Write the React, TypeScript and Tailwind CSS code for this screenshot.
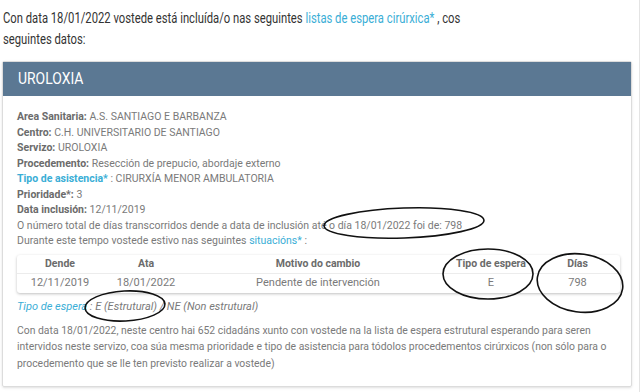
const LINK = 'text-[#3aaed6]';

function Info({ label, children }: { label: string; children: React.ReactNode }) {
  return (
    <div>
      <span className="font-bold text-[#6b6b6b]">{label}</span> {children}
    </div>
  );
}

export default function App() {
  return (
    <div className="relative w-[640px] h-[392px] overflow-hidden bg-white border-r border-[#e4e4e4] font-['Roboto',sans-serif]">
      <p className="w-[660px] origin-left scale-x-[0.75] px-[4px] pt-[8px] text-[15px] leading-[21px] text-[#333]">
        Con data 18/01/2022 vostede está incluída/o nas seguintes{' '}
        <span className={LINK}>listas de espera cirúrxica*</span> , cos seguintes datos:
      </p>

      <div className="mt-[11px] ml-[2px] w-[630px] border border-[#dcdcdc] rounded-[2px] shadow-sm">
        <div className="h-[34px] bg-[#5b7893] px-[15px] flex items-center">
          <h2 className="origin-left scale-x-[0.87] text-white text-[16px]">UROLOXIA</h2>
        </div>

        <div className="px-[14px] pt-[13px] pb-[14px] text-[10.5px] text-[#7a7a7a]">
          <div className="leading-[15.5px]">
            <Info label="Area Sanitaria:">A.S. SANTIAGO E BARBANZA</Info>
            <Info label="Centro:">C.H. UNIVERSITARIO DE SANTIAGO</Info>
            <Info label="Servizo:">UROLOXIA</Info>
            <Info label="Procedemento:">Resección de prepucio, abordaje externo</Info>
            <div>
              <span className={`font-bold ${LINK}`}>Tipo de asistencia*</span> : CIRURXÍA MENOR AMBULATORIA
            </div>
            <Info label="Prioridade*:">3</Info>
            <Info label="Data inclusión:">12/11/2019</Info>
            <div>O número total de días transcorridos dende a data de inclusión até o día 18/01/2022 foi de: 798</div>
            <div>
              Durante este tempo vostede estivo nas seguintes <span className={LINK}>situacións*</span> :
            </div>
          </div>

          <table className="mt-[6px] w-[603px] table-fixed border-collapse shadow-[0_1px_3px_rgba(0,0,0,0.25)] rounded-[3px] text-[11px]">
            <colgroup>
              <col className="w-[86px]" />
              <col className="w-[86px]" />
              <col className="w-[258px]" />
              <col className="w-[88px]" />
              <col />
            </colgroup>
            <thead>
              <tr className="h-[19px] border-b border-[#ececec] text-[#6b6b6b] font-bold text-[10.5px]">
                <th>Dende</th>
                <th>Ata</th>
                <th>Motivo do cambio</th>
                <th>Tipo de espera</th>
                <th>Días</th>
              </tr>
            </thead>
            <tbody>
              <tr className="h-[19px] text-center text-[#7a7a7a]">
                <td>12/11/2019</td>
                <td>18/01/2022</td>
                <td>Pendente de intervención</td>
                <td>E</td>
                <td>798</td>
              </tr>
            </tbody>
          </table>

          <div className="mt-[6px] italic leading-[15px] text-[11px]">
            <span className={LINK}>Tipo de espera</span> : E (Estrutural) / NE (Non estrutural)
          </div>

          <p className="mt-[9px] leading-[16.5px] text-[10.4px]">
            Con data 18/01/2022, neste centro hai 652 cidadáns xunto con vostede na la lista de espera estrutural esperando para seren
            intervidos neste servizo, coa súa mesma prioridade e tipo de asistencia para tódolos procedementos cirúrxicos (non sólo para o
            procedemento que se lle ten previsto realizar a vostede)
          </p>
        </div>
      </div>

      <svg className="absolute inset-0 pointer-events-none" width="640" height="392" fill="none" stroke="#111" strokeWidth="1.6">
        <ellipse cx="404" cy="223" rx="80" ry="15" transform="rotate(-2 404 223)" />
        <ellipse cx="488" cy="274" rx="45" ry="25" />
        <ellipse cx="580" cy="283" rx="43" ry="29" transform="rotate(8 580 283)" />
        <ellipse cx="125" cy="306" rx="40" ry="15" transform="rotate(-3 125 306)" />
      </svg>
    </div>
  );
}
